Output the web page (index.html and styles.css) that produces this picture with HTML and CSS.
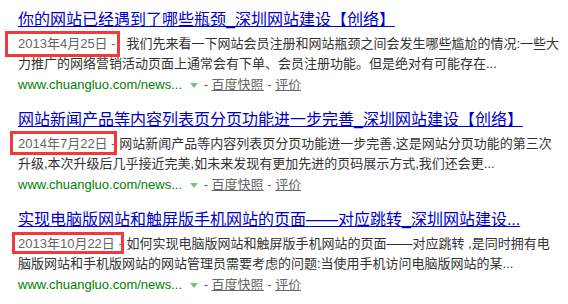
FILE: index.html
```html
<!DOCTYPE html>
<html lang="zh-CN">
<head>
<meta charset="utf-8">
<title>搜索结果</title>
<link rel="stylesheet" href="styles.css">
</head>
<body>
<div class="results">
  <div class="result">
    <h3 class="title"><a href="#">你的网站已经遇到了哪些瓶颈_深圳网站建设【创络】</a></h3>
    <div class="abstract"><span class="date mark-a">2013年4月25日</span><span class="sep">&nbsp;-&nbsp;&nbsp;&nbsp;</span>我们先来看一下网站会员注册和网站瓶颈之间会发生哪些尴尬的情况:一些大力推广的网络营销活动页面上通常会有下单、会员注册功能。但是绝对有可能存在...</div>
    <div class="meta"><span class="url">www.chuangluo.com/news...</span><span class="arrow"></span><span class="sep">&nbsp;-&nbsp;</span><a class="link" href="#">百度快照</a><span class="sep">&nbsp;-&nbsp;</span><a class="link" href="#">评价</a></div>
  </div>
  <div class="result">
    <h3 class="title"><a href="#">网站新闻产品等内容列表页分页功能进一步完善_深圳网站建设【创络】</a></h3>
    <div class="abstract"><span class="date mark-b">2014年7月22日</span><span class="sep">&nbsp;-&nbsp;</span>网站新闻产品等内容列表页分页功能进一步完善,这是网站分页功能的第三次升级,本次升级后几乎接近完美,如未来发现有更加先进的页码展示方式,我们还会更...</div>
    <div class="meta"><span class="url">www.chuangluo.com/news...</span><span class="arrow"></span><span class="sep">&nbsp;-&nbsp;</span><a class="link" href="#">百度快照</a><span class="sep">&nbsp;-&nbsp;</span><a class="link" href="#">评价</a></div>
  </div>
  <div class="result">
    <h3 class="title"><a href="#">实现电脑版网站和触屏版手机网站的页面——对应跳转_深圳网站建设...</a></h3>
    <div class="abstract"><span class="date mark-c">2013年10月22日</span><span class="sep">&nbsp;-&nbsp;</span>如何实现电脑版网站和触屏版手机网站的页面——对应跳转 ,是同时拥有电<br>脑版网站和手机版网站的网站管理员需要考虑的问题:当使用手机访问电脑版网站的某...</div>
    <div class="meta"><span class="url">www.chuangluo.com/news...</span><span class="arrow"></span><span class="sep">&nbsp;-&nbsp;</span><a class="link" href="#">百度快照</a><span class="sep">&nbsp;-&nbsp;</span><a class="link" href="#">评价</a></div>
  </div>
</div>
</body>
</html>
```

FILE: styles.css
```css
html, body {
  margin: 0;
  padding: 0;
  background: #ffffff;
}

body {
  font-family: "Liberation Sans", Arial, "Noto Sans CJK SC", sans-serif;
  color: #333333;
  width: 568px;
  height: 304px;
  overflow: hidden;
}

.results {
  padding: 9px 0 0 18px;
  width: 546px;
}

.result {
  margin-bottom: 13px;
}

.title {
  margin: 0;
  font-size: 16px;
  font-weight: normal;
  line-height: 22px;
  white-space: nowrap;
}

.title a {
  color: #0000cc;
  text-decoration: underline;
}

.abstract {
  margin-top: 3px;
  font-size: 13px;
  line-height: 20px;
  color: #333333;
}

.date {
  position: relative;
  color: #666666;
}

.date::after {
  content: "";
  position: absolute;
  border: 3px solid #f2393b;
  pointer-events: none;
}

.mark-a::after {
  left: -13px;
  right: -12px;
  top: -5px;
  bottom: -6px;
}

.mark-b::after {
  left: -8px;
  right: -9px;
  top: -5px;
  bottom: -4px;
}

.mark-c::after {
  left: -6px;
  right: -9px;
  top: -4px;
  bottom: -3px;
}

.sep {
  color: #666666;
}

.meta {
  font-size: 13px;
  line-height: 22px;
  white-space: nowrap;
}

.url {
  color: #008000;
}

.arrow {
  display: inline-block;
  width: 0;
  height: 0;
  margin: 0 2px 1px 8px;
  border-left: 4px solid transparent;
  border-right: 4px solid transparent;
  border-top: 5px solid #7cc37c;
  vertical-align: middle;
}

.link {
  color: #666666;
  text-decoration: underline;
}
```
